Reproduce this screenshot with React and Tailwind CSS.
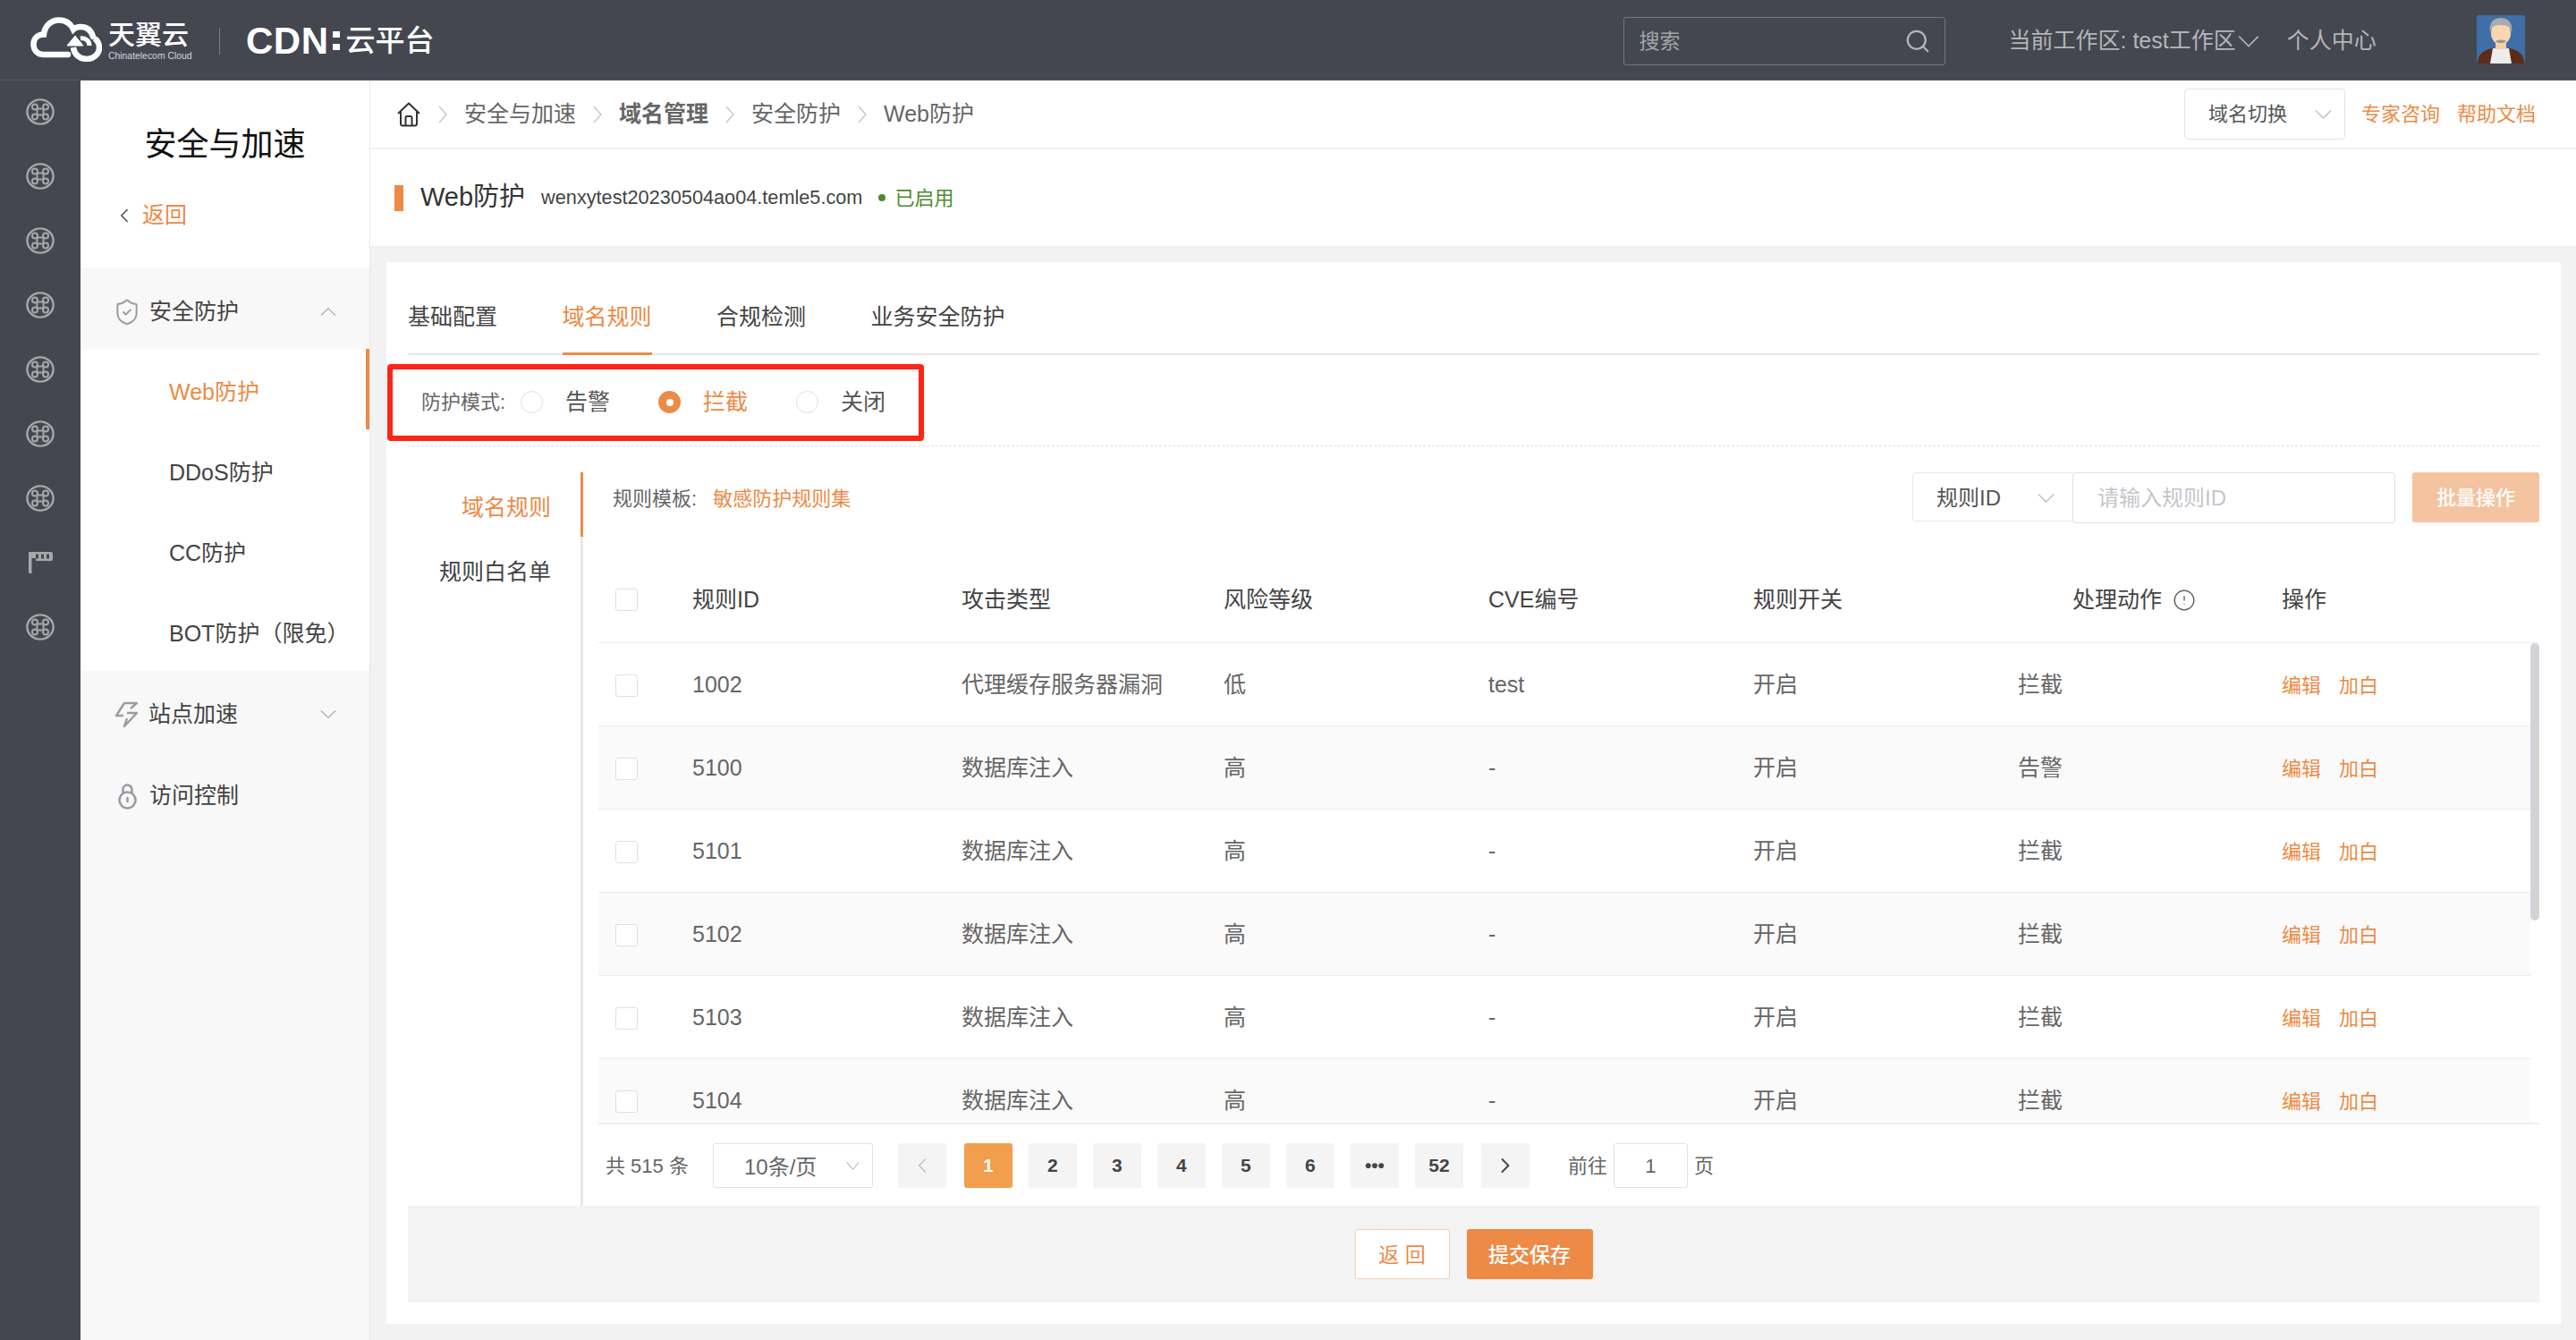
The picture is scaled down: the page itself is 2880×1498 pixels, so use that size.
import React from "react";
import { ChevronLeft, ChevronRight, Search, ShieldCheck, AlertCircle } from "lucide-react";

const RailIcon = () => (
  <svg width="32" height="30" viewBox="0 0 32 30" fill="none" stroke="#a6a8ab" strokeWidth="2">
    <ellipse cx="16" cy="15" rx="14.6" ry="13.6" strokeWidth="2.4" />
    <rect x="12.5" y="11.5" width="7" height="7" />
    <circle cx="10" cy="9.5" r="3" />
    <circle cx="22" cy="9.5" r="3" />
    <circle cx="10" cy="20.5" r="3" />
    <circle cx="22" cy="20.5" r="3" />
  </svg>
);

const FlagIcon = () => (
  <svg width="28" height="24" viewBox="0 0 28 24" fill="#a6a8ab">
    <rect x="0" y="0" width="3.5" height="24" />
    <path d="M3 0h22a2 2 0 0 1 2 2v6a2 2 0 0 1-2 2H8V7H3z" />
    <rect x="8" y="2.5" width="3" height="5" fill="#444750" />
    <rect x="14" y="2.5" width="3" height="5" fill="#444750" />
    <rect x="20" y="2.5" width="3" height="5" fill="#444750" />
  </svg>
);

const CloudLogo = () => (
  <svg width="80" height="50" viewBox="0 0 80 50" fill="none" stroke="#fff" strokeWidth="6.5">
    <path d="M42 42H14C7 42 3.500 36 3.500 30.500 3.500 24 8 19.500 15 19.500 16 10 23 3.500 32 3.500 39 3.500 45 7.500 48 14 50 12 53 11 56 11 63 11 68 15 70 22" strokeLinecap="round" />
    <path d="M72 24c3.500 3 5 6 5 10 0 8-7 13-14 13-8 0-14-5-15-13" />
    <path d="M41 32L50 21 59 32z" fill="#fff" strokeWidth="1" />
    <path d="M56 24c6-1 10 3 10 8" strokeWidth="5" />
  </svg>
);

const HomeIcon = () => (
  <svg width="28" height="28" viewBox="0 0 28 28" fill="none" stroke="#333" strokeWidth="2">
    <path d="M2 13L14 1.500 26 13M5 10.500V24a2.500 2.500 0 0 0 2.500 2.500h13A2.500 2.500 0 0 0 23 24V10.500" strokeLinejoin="round" />
    <path d="M10.500 26V17.500a1.500 1.500 0 0 1 1.500-1.500h4a1.500 1.500 0 0 1 1.500 1.500V26" />
  </svg>
);

const LockIcon = () => (
  <svg width="21" height="29" viewBox="0 0 21 29" fill="none" stroke="#9b9ca3" strokeWidth="2.600">
    <circle cx="10.500" cy="18.500" r="9" />
    <path d="M5.500 11V6.500a5 5 0 0 1 10 0V11" />
    <path d="M10.500 16v4" strokeLinecap="round" />
  </svg>
);

const BoltIcon = () => (
  <svg width="26" height="30" viewBox="0 0 26 30" fill="none" stroke="#9b9ca3" strokeWidth="2.400" strokeLinejoin="round">
    <path d="M10 16H2L11 2h14l-7 6" />
    <path d="M14 13h11L11 28l3-9" />
  </svg>
);

const Avatar = () => (
  <svg width="54" height="54" viewBox="0 0 54 54">
    <rect width="54" height="54" rx="3" fill="#3f6ea8" />
    <path d="M1 54c0-11 7-15 16-17h20c9 2 16 6 16 17z" fill="#5b2c1c" />
    <path d="M15 54l3-17h18l3 17z" fill="#ececec" />
    <rect x="21" y="27" width="12" height="11" fill="#f2cfa6" />
    <ellipse cx="27" cy="20" rx="11" ry="13" fill="#f8d7b0" />
    <path d="M15 20C13 7 20 3 27 3s14 4 12 17c-1-6-3-9-12-9s-11 3-12 9z" fill="#a9abad" />
    <path d="M21 29c3-2 9-2 12 0-2 3-10 3-12 0z" fill="#9a9a9a" />
  </svg>
);

const Sep = () => (
  <svg width="10" height="20" viewBox="0 0 10 20" fill="none" stroke="#c2c4cc" strokeWidth="1.300" className="mx-[19px]">
    <path d="M1 1l8 9-8 9" />
  </svg>
);

const Down = ({ w = 19, h = 10, color = "#b9bbc2", up = false }) => (
  <svg width={w} height={h} viewBox="0 0 20 10" preserveAspectRatio="none" fill="none" stroke={color} strokeWidth="1.300">
    <path d={up ? "M1 9.500L10 1l9 8.500" : "M1 .5L10 9l9-8.500"} />
  </svg>
);

const Radio = ({ label, active }) => (
  <div className="flex items-center gap-[25px]">
    {active ? (
      <span className="w-[25px] h-[25px] rounded-full bg-[#ec8a46] flex items-center justify-center">
        <span className="w-[8px] h-[8px] rounded-full bg-white" />
      </span>
    ) : (
      <span className="w-[25px] h-[25px] rounded-full border border-[#dcdfe6] bg-white" />
    )}
    <span className={active ? "text-[25px] text-[#ec8a46]" : "text-[25px] text-[#555]"}>{label}</span>
  </div>
);

const Check = () => <span className="block w-[25px] h-[25px] rounded-[3px] border border-[#dfe0e6] bg-white" />;

const rows = [
  ["1002", "代理缓存服务器漏洞", "低", "test", "开启", "拦截"],
  ["5100", "数据库注入", "高", "-", "开启", "告警"],
  ["5101", "数据库注入", "高", "-", "开启", "拦截"],
  ["5102", "数据库注入", "高", "-", "开启", "拦截"],
  ["5103", "数据库注入", "高", "-", "开启", "拦截"],
  ["5104", "数据库注入", "高", "-", "开启", "拦截"],
];

const PageBtn = ({ children, active, dim }) => (
  <span
    className={
      active
        ? "w-[54px] h-[50px] rounded-[3px] bg-[#f29e4c] text-white font-bold text-[21px] flex items-center justify-center"
        : dim
        ? "w-[54px] h-[50px] rounded-[3px] bg-[#f4f4f5] text-[#c0c4cc] flex items-center justify-center mr-[2px]"
        : "w-[54px] h-[50px] rounded-[3px] bg-[#f4f4f5] text-[#444] font-bold text-[21px] flex items-center justify-center"
    }
  >
    {children}
  </span>
);

const gridCols = "grid grid-cols-[105px_301px_293px_296px_296px_296px_295px_1fr] items-center";

export default function App() {
  return (
    <div className="w-[2880px] h-[1498px] overflow-hidden flex flex-col bg-white text-[#555] [font-family:'Liberation_Sans','Noto_Sans_CJK_SC',sans-serif]">
      {/* top bar */}
      <header className="h-[90px] shrink-0 bg-[#444750] border-b border-[#55575f] flex items-center pt-[3px] text-[#b4b5b8]">
        <div className="ml-[34px] mt-[-5px] flex items-center">
          <CloudLogo />
          <div className="ml-[7px] w-[90px] mt-[5px] flex flex-col text-white">
            <span className="text-[30px] leading-[32px] font-medium">天翼云</span>
            <span className="text-[10.4px] leading-[12px] mt-[2px] whitespace-nowrap text-[#d6d6d8]">Chinatelecom Cloud</span>
          </div>
          <span className="ml-[34px] w-px h-[30px] mt-[4px] bg-[#7a7c83]" />
          <div className="ml-[29px] mt-[4px] flex items-center text-white">
            <span className="text-[42px] leading-[42px] font-bold tracking-[0.5px]">CDN</span>
            <span className="ml-[4px] flex flex-col gap-[7px]">
              <span className="w-[8px] h-[7px] bg-white" />
              <span className="w-[8px] h-[7px] bg-white" />
            </span>
            <span className="ml-[7px] text-[33px] leading-[40px] font-medium">云平台</span>
          </div>
        </div>
        <div className="ml-[1329px] w-[360px] h-[54px] border border-[#74767d] rounded-[3px] flex items-center justify-between pl-[17px] pr-[15px]">
          <span className="text-[23px] text-[#a5a6a9]">搜索</span>
          <Search size={30} strokeWidth={1.8} className="text-[#b4b5b8]" />
        </div>
        <span className="ml-[71px] text-[25px] whitespace-nowrap">当前工作区: test工作区</span>
        <span className="ml-[2px]"><Down w={24} h={13} color="#b4b5b8" /></span>
        <span className="ml-[31px] text-[25px] whitespace-nowrap">个人中心</span>
        <span className="ml-[112px] mt-[-4px]"><Avatar /></span>
      </header>

      <div className="flex-1 flex min-h-0">
        {/* icon rail */}
        <nav className="w-[90px] shrink-0 bg-[#444750] flex flex-col items-center pt-[20px] gap-[42px]">
          {[0, 1, 2, 3, 4, 5, 6].map((i) => <RailIcon key={i} />)}
          <span className="h-[30px] flex items-center pl-[2px]"><FlagIcon /></span>
          <RailIcon />
        </nav>

        {/* sidebar */}
        <aside className="w-[324px] shrink-0 border-r border-[#e8e8e8] bg-white flex flex-col">
          <div className="h-[210px] flex flex-col">
            <h1 className="mt-[49px] text-[36px] leading-[46px] text-[#111] text-center font-normal">安全与加速</h1>
            <div className="mt-[37px] ml-[36px] flex items-center gap-[7px]">
              <ChevronLeft size={26} strokeWidth={1.3} className="text-[#444]" />
              <span className="text-[25px] text-[#ec8a46]">返回</span>
            </div>
          </div>
          <div className="h-[90px] bg-[#f8f8f8] flex items-center pl-[38px] pr-[37px] pt-[7px]">
            <ShieldCheck size={32} strokeWidth={1.5} className="text-[#9b9ca3] ml-[-2px]" />
            <span className="ml-[9px] text-[25px] text-[#444]">安全防护</span>
            <span className="ml-auto"><Down w={18} h={9} color="#aaa" up /></span>
          </div>
          <div className="h-[90px] flex items-center pl-[99px] pt-[7px] text-[25px] text-[#ec8a46] border-r-4 border-[#ec8a46]">Web防护</div>
          <div className="h-[90px] flex items-center pl-[99px] pt-[7px] text-[25px] text-[#444]">DDoS防护</div>
          <div className="h-[90px] flex items-center pl-[99px] pt-[7px] text-[25px] text-[#444]">CC防护</div>
          <div className="h-[90px] flex items-center pl-[99px] pt-[7px] text-[25px] text-[#444] whitespace-nowrap">BOT防护（限免）</div>
          <div className="h-[90px] bg-[#f8f8f8] flex items-center pl-[38px] pr-[37px] pt-[7px]">
            <BoltIcon />
            <span className="ml-[12px] text-[25px] text-[#444]">站点加速</span>
            <span className="ml-auto"><Down w={18} h={9} color="#aaa" /></span>
          </div>
          <div className="flex-1 bg-[#f8f8f8] pl-[42px] pt-[34px]">
            <div className="h-[32px] flex items-center">
              <LockIcon />
              <span className="ml-[14px] text-[25px] text-[#444]">访问控制</span>
            </div>
          </div>
        </aside>

        {/* main */}
        <main className="flex-1 min-w-0 flex flex-col">
          <div className="h-[77px] shrink-0 border-b-2 border-[#f2f2f2] flex items-center pl-[29px] pr-[45px]">
            <HomeIcon />
            <Sep />
            <span className="text-[25px] text-[#666]">安全与加速</span>
            <Sep />
            <span className="text-[25px] font-bold text-[#666]">域名管理</span>
            <Sep />
            <span className="text-[25px] text-[#666]">安全防护</span>
            <Sep />
            <span className="text-[25px] text-[#666]">Web防护</span>
            <div className="ml-auto w-[180px] h-[57px] border border-[#e4e4e8] rounded-[4px] flex items-center justify-between pl-[26px] pr-[14px]">
              <span className="text-[22px] text-[#555]">域名切换</span>
              <Down />
            </div>
            <span className="ml-[18px] text-[22px] text-[#ec8a46]">专家咨询</span>
            <span className="ml-[19px] text-[22px] text-[#ec8a46]">帮助文档</span>
          </div>

          <div className="h-[108px] shrink-0 flex items-center pl-[27px]">
            <span className="w-[10px] h-[29px] bg-[#ec8a46]" />
            <span className="ml-[19px] text-[29px] text-[#333]">Web防护</span>
            <span className="ml-[18px] text-[21.7px] text-[#444]">wenxytest20230504ao04.temle5.com</span>
            <span className="ml-[18px] w-[8px] h-[8px] rounded-full bg-[#4f8a2f]" />
            <span className="ml-[10px] text-[22px] text-[#4f8a2f]">已启用</span>
          </div>

          <div className="flex-1 bg-[#f2f2f2] pt-[18px] pb-[18px] pl-[18px] pr-[17px] min-h-0">
            <div className="relative h-full bg-white px-[24px] pb-[24px] flex flex-col">
              {/* tabs */}
              <div className="h-[104px] shrink-0 border-b-2 border-[#e7e7ec] flex gap-[72.5px]">
                {["基础配置", "域名规则", "合规检测", "业务安全防护"].map((t, i) => (
                  <div
                    key={t}
                    className={
                      i === 1
                        ? "h-[104px] pt-[45px] leading-[32px] text-[25px] text-[#ec8a46] border-b-[3px] border-[#ec8a46]"
                        : "h-[104px] pt-[45px] leading-[32px] text-[25px] text-[#444]"
                    }
                  >
                    {t}
                  </div>
                ))}
              </div>

              {/* mode */}
              <div className="h-[102px] shrink-0 border-b border-dashed border-[#dedee2] flex items-center pl-[15px] pt-[4px]">
                <span className="w-[111px] text-[22px] text-[#666]">防护模式:</span>
                <div className="flex items-center gap-[54px]">
                  <Radio label="告警" />
                  <Radio label="拦截" active />
                  <Radio label="关闭" />
                </div>
              </div>

              {/* red mark */}
              <div className="absolute left-[1px] top-[114px] w-[600px] h-[86px] border-[6px] border-[#ff2416] rounded-[4px] pointer-events-none" />

              {/* body */}
              <div className="mt-[29px] h-[820px] shrink-0 flex">
                <div className="w-[196px] shrink-0 border-r-[3px] border-[#e7e7ec] relative flex flex-col items-end pr-[33px] pt-[4px] text-[25px]">
                  <span className="h-[72px] flex items-center text-[#ec8a46]">域名规则</span>
                  <span className="h-[72px] flex items-center text-[#444]">规则白名单</span>
                  <span className="absolute right-[-3px] top-0 w-[3px] h-[72px] bg-[#ec8a46]" />
                </div>

                <div className="flex-1 min-w-0 pl-[17px] flex flex-col">
                  {/* toolbar */}
                  <div className="h-[57px] shrink-0 flex items-start pl-[16px]">
                    <span className="mt-[14px] text-[22px] leading-[32px] text-[#666]">规则模板:</span>
                    <span className="mt-[14px] ml-[18px] text-[22px] leading-[32px] text-[#ec8a46]">敏感防护规则集</span>
                    <div className="ml-auto w-[179px] h-[55px] border border-[#e8e8ec] border-r-0 rounded-l-[4px] flex items-center justify-between pl-[26px] pr-[20px] pt-[2px]">
                      <span className="text-[24px] text-[#555]">规则ID</span>
                      <Down />
                    </div>
                    <div className="w-[361px] h-[57px] border border-[#e2e2e6] rounded-[3px] flex items-center pl-[27px]">
                      <span className="text-[24px] text-[#c4c6cc]">请输入规则ID</span>
                    </div>
                    <div className="ml-[19px] w-[142px] h-[56px] rounded-[3px] bg-[#f4c39f] flex items-center justify-center text-[22px] text-white font-medium">批量操作</div>
                  </div>

                  {/* table head */}
                  <div className={`mt-[35px] h-[99px] shrink-0 pt-[3px] border-b border-[#ebecef] text-[25px] text-[#444] ${gridCols}`}>
                    <span className="pl-[19px]"><Check /></span>
                    <span>规则ID</span>
                    <span>攻击类型</span>
                    <span>风险等级</span>
                    <span>CVE编号</span>
                    <span>规则开关</span>
                    <span className="flex items-center gap-[12px] ml-[61px] whitespace-nowrap">
                      处理动作
                      <AlertCircle size={26} strokeWidth={1.2} className="text-[#555]" />
                    </span>
                    <span>操作</span>
                  </div>

                  {/* rows */}
                  <div className="relative h-[538px] shrink-0 overflow-hidden border-b-2 border-[#eeeef3]">
                    {rows.map((r, i) => (
                      <div
                        key={r[0]}
                        className={
                          i % 2 === 1
                            ? `h-[93px] mr-[10px] pt-[2px] border-b border-[#ebecef] bg-[#fafafa] text-[25px] text-[#666] ${gridCols}`
                            : `h-[93px] mr-[10px] pt-[2px] border-b border-[#ebecef] bg-white text-[25px] text-[#666] ${gridCols}`
                        }
                      >
                        <span className="pl-[19px]"><Check /></span>
                        {r.map((c, j) => <span key={j} className="whitespace-nowrap">{c}</span>)}
                        <span className="flex gap-[20px] text-[22px] text-[#ec8a46] whitespace-nowrap">
                          <span>编辑</span>
                          <span>加白</span>
                        </span>
                      </div>
                    ))}
                    <span className="absolute right-0 top-0 w-[10px] h-[310px] rounded-[5px] bg-[#d2d3d6]" />
                  </div>

                  {/* pagination */}
                  <div className="mt-[21px] h-[50px] shrink-0 flex items-center pl-[8px] text-[22px] text-[#666]">
                    <span className="whitespace-nowrap">共 515 条</span>
                    <div className="ml-[27px] w-[179px] h-[50px] border border-[#e2e2e6] rounded-[3px] flex items-center justify-between pl-[34px] pr-[14px]">
                      <span className="text-[24px] pt-[3px]">10条/页</span>
                      <Down w={15} h={9} />
                    </div>
                    <div className="ml-[28px] flex gap-[18px]">
                      <PageBtn dim><ChevronLeft size={28} strokeWidth={1.3} /></PageBtn>
                      <PageBtn active>1</PageBtn>
                      <PageBtn>2</PageBtn>
                      <PageBtn>3</PageBtn>
                      <PageBtn>4</PageBtn>
                      <PageBtn>5</PageBtn>
                      <PageBtn>6</PageBtn>
                      <PageBtn>•••</PageBtn>
                      <PageBtn>52</PageBtn>
                      <span className="ml-[2px]"><PageBtn><ChevronRight size={28} strokeWidth={1.6} /></PageBtn></span>
                    </div>
                    <span className="ml-[43px]">前往</span>
                    <div className="ml-[7px] w-[83px] h-[50px] border border-[#e2e2e6] rounded-[3px] flex items-center justify-center">1</div>
                    <span className="ml-[7px]">页</span>
                  </div>
                </div>
              </div>

              {/* footer */}
              <div className="h-[108px] shrink-0 bg-[#f3f3f3] flex items-center justify-center gap-[19px]">
                <div className="w-[106px] h-[56px] border border-[#f6cfb0] rounded-[3px] bg-white flex items-center justify-center text-[23px] pt-[2px] text-[#ec8a46]">返 回</div>
                <div className="w-[141px] h-[56px] rounded-[3px] bg-[#ec8a46] flex items-center justify-center text-[23px] pt-[2px] text-white font-medium">提交保存</div>
              </div>
            </div>
          </div>
        </main>
      </div>
    </div>
  );
}
